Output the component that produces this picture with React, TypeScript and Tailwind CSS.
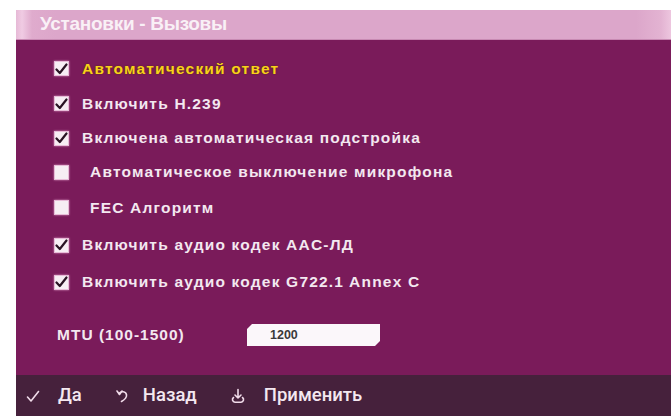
import React from "react";

type Item = { label: string; checked: boolean; highlight?: boolean; h: number };

const items: Item[] = [
  { label: "Автоматический ответ", checked: true, highlight: true, h: 35 },
  { label: "Включить H.239", checked: true, h: 35 },
  { label: "Включена автоматическая подстройка", checked: true, h: 34 },
  { label: "Автоматическое выключение микрофона", checked: false, h: 34 },
  { label: "FEC Алгоритм", checked: false, h: 37 },
  { label: "Включить аудио кодек AAC-ЛД", checked: true, h: 38 },
  { label: "Включить аудио кодек G722.1 Annex C", checked: true, h: 36 },
];

function Box({ checked }: { checked: boolean }) {
  return (
    <div className="w-[15px] h-[15px] bg-[#f7eef4] border border-[#e8bcd8] shadow-[0_0_2px_rgba(255,200,235,0.7)] flex items-center justify-center shrink-0">
      {checked && (
        <svg width="13" height="12" viewBox="0 0 13 12">
          <path d="M1.5 6.5 L4.8 10 L11.5 1.5" fill="none" stroke="#2a1424" strokeWidth="2.2" strokeLinecap="round" strokeLinejoin="round" />
        </svg>
      )}
    </div>
  );
}

export default function App() {
  return (
    <div className="w-[671px] h-[416px] bg-white pt-[10px] pl-[16px] flex flex-col overflow-hidden" style={{ fontFamily: '"Liberation Sans", Arial, sans-serif' }}>
      <div className="h-[30px] shrink-0 flex items-center bg-[linear-gradient(90deg,#e6b9d6_0px,#f0cbe3_6px,#dfabcd_16px,#dca6ca_40px,#dca6ca_620px,#e3b3d2_645px,#edc6df_655px)] border-b border-[#c88ab3]">
        <span className="ml-[24px] text-[19px] font-bold text-[#f9f0f6] tracking-[-0.3px]">Установки - Вызовы</span>
      </div>

      <div className="flex-1 bg-[#7a1b5a] pt-[11px] pl-[38px]">
        {items.map((it) => (
          <div key={it.label} className="flex items-center" style={{ height: it.h }}>
            <Box checked={it.checked} />
            <span
              className={
                "text-[15.5px] font-bold tracking-[1.2px] " +
                (it.checked ? "ml-[13px] " : "ml-[21px] ") +
                (it.highlight ? "text-[#f7d21a] [text-shadow:0_0_2px_#5a2a10]" : "text-[#f3e8f0]")
              }
            >
              {it.label}
            </span>
          </div>
        ))}

        <div className="flex items-center h-[24px] mt-[23px]">
          <span className="ml-[3px] w-[190px] text-[15.5px] font-bold tracking-[1px] text-[#f3e8f0]">MTU (100-1500)</span>
          <div className="w-[133px] h-[22px] bg-[#fbf7fa] [clip-path:polygon(5px_0,100%_0,100%_calc(100%-5px),calc(100%-5px)_100%,0_100%,0_5px)] flex items-center">
            <span className="ml-[23px] text-[12.5px] font-bold text-[#3a3a3a]">1200</span>
          </div>
        </div>
      </div>

      <div className="h-[41px] shrink-0 bg-[#46213c] flex items-center text-[#f4e8f0]" style={{ fontFamily: 'Roboto, "Liberation Sans", sans-serif' }}>
        <svg className="ml-[10px]" width="14" height="14" viewBox="0 0 14 14">
          <path d="M1.5 8 L5 12 L12.5 2.5" fill="none" stroke="#f1dcea" strokeWidth="1.6" strokeLinecap="round" strokeLinejoin="round" />
        </svg>
        <span className="ml-[18px] text-[18.5px] font-medium">Да</span>
        <svg className="ml-[33px]" width="16" height="16" viewBox="0 0 16 16">
          <path d="M4 5.5 C6 3 11 3 11.5 7 C12 10 9 12 6.5 13.5" fill="none" stroke="#f1dcea" strokeWidth="1.6" strokeLinecap="round" />
          <path d="M2 3 L4.5 6.5 L7 3" fill="none" stroke="#f1dcea" strokeWidth="1.6" strokeLinecap="round" strokeLinejoin="round" />
        </svg>
        <span className="ml-[12px] text-[18.5px] font-medium">Назад</span>
        <svg className="ml-[33px]" width="16" height="16" viewBox="0 0 16 16">
          <path d="M8 1.5 V10 M5 7 L8 10 L11 7" fill="none" stroke="#f1dcea" strokeWidth="1.6" strokeLinecap="round" strokeLinejoin="round" />
          <path d="M3.5 9.5 C1.5 11 2.5 14 5 14.3 H11 C13.5 14 14.5 11 12.5 9.5" fill="none" stroke="#f1dcea" strokeWidth="1.6" strokeLinecap="round" />
        </svg>
        <span className="ml-[18px] text-[18.5px] font-medium">Применить</span>
      </div>
    </div>
  );
}
